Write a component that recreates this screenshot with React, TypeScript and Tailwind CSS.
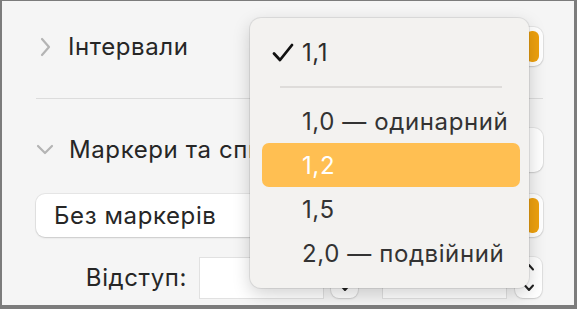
import React from 'react';

const font = { fontFamily: 'Inter, "Noto Sans", sans-serif' };

const ChevronRight = () => (
  <svg width="14" height="20" viewBox="0 0 14 20" className="shrink-0">
    <path d="M4 2 L11 10 L4 18" fill="none" stroke="#b4b4b4" strokeWidth="2.2" strokeLinecap="round" strokeLinejoin="round" />
  </svg>
);

const ChevronDown = () => (
  <svg width="18" height="14" viewBox="0 0 18 14" className="shrink-0">
    <path d="M2 3 L9 10 L16 3" fill="none" stroke="#b4b4b4" strokeWidth="2.2" strokeLinecap="round" strokeLinejoin="round" />
  </svg>
);

const Check = () => (
  <svg width="22" height="20" viewBox="0 0 22 20" className="shrink-0">
    <path d="M2 10.5 L8 17 L20 2" fill="none" stroke="#111" strokeWidth="2.8" strokeLinecap="round" strokeLinejoin="round" />
  </svg>
);

const PopupButton = ({ label, h, arrow = true }: { label?: string; h: string; arrow?: boolean }) => (
  <div className={`${h} flex items-center justify-between rounded-[9px] bg-white shadow-[0_0_0_1px_rgba(0,0,0,0.06),0_1px_2px_rgba(0,0,0,0.12)] pl-[18px] pr-[4px]`}>
    <span className="text-[24px] tracking-[0.6px] text-[#262626]">{label}</span>
    {arrow && <div className="h-[calc(100%-8px)] w-[13px] rounded-[6px] bg-[#eea10e]" />}
  </div>
);

const Stepper = () => (
  <div className="flex h-[41px] w-[27px] shrink-0 flex-col items-center justify-between rounded-[8px] bg-white py-[6px] shadow-[0_0_0_1px_rgba(0,0,0,0.06),0_1px_2px_rgba(0,0,0,0.12)]">
    <svg width="12" height="8" viewBox="0 0 12 8"><path d="M2 6.5 L6 2 L10 6.5" fill="none" stroke="#222" strokeWidth="2" strokeLinecap="round" strokeLinejoin="round" /></svg>
    <svg width="12" height="8" viewBox="0 0 12 8"><path d="M2 1.5 L6 6 L10 1.5" fill="none" stroke="#222" strokeWidth="2" strokeLinecap="round" strokeLinejoin="round" /></svg>
  </div>
);

const items = ['1,0 — одинарний', '1,2', '1,5', '2,0 — подвійний'];

export default function App() {
  return (
    <div style={font} className="relative h-[309px] w-[577px] overflow-hidden border-b-4 border-l-2 border-r-[3px] border-t border-[#7c7c7c] bg-[#f5f5f5]">
      <div className="flex flex-col pl-[34px] pr-[31px] pt-[26px]">
        {/* Інтервали */}
        <div className="flex h-[39px] items-center justify-between">
          <div className="flex items-center gap-[16px] pl-[2px]">
            <ChevronRight />
            <span className="text-[24px] tracking-[0.6px] text-[#262626]">Інтервали</span>
          </div>
          <div className="w-[140px]"><PopupButton h="h-[39px]" /></div>
        </div>

        <div className="mt-[32px] h-px bg-[#dcdcdc]" />

        {/* Маркери та списки */}
        <div className="mt-[29px] flex h-[44px] items-center justify-between">
          <div className="flex items-center gap-[15px]">
            <ChevronDown />
            <span className="whitespace-nowrap text-[24px] tracking-[0.6px] text-[#262626]">Маркери та списки</span>
          </div>
          <div className="w-[140px]"><PopupButton h="h-[44px]" arrow={false} /></div>
        </div>

        <div className="mt-[22px]">
          <PopupButton h="h-[43px]" label="Без маркерів" />
        </div>

        {/* Відступ */}
        <div className="mt-[20px] flex h-[41px] items-center">
          <span className="w-[164px] shrink-0 pr-[13px] text-right text-[24px] tracking-[0.6px] text-[#262626]">Відступ:</span>
          <div className="h-[40px] w-[123px] shrink-0 bg-white shadow-[0_0_0_1px_rgba(0,0,0,0.08)]" />
          <div className="ml-[8px]"><Stepper /></div>
          <div className="ml-[25px] h-[40px] w-[123px] shrink-0 bg-white shadow-[0_0_0_1px_rgba(0,0,0,0.08)]" />
          <div className="ml-[9px]"><Stepper /></div>
        </div>
      </div>

      {/* Dropdown menu */}
      <div className="absolute left-[248px] top-[17px] flex h-[270px] w-[279px] flex-col rounded-[11px] bg-[#f3f2f0] pb-[12px] pl-[12px] pr-[9px] pt-[13px] shadow-[0_0_0_1px_rgba(0,0,0,0.08),0_6px_18px_rgba(0,0,0,0.18)]">
        <div className="flex h-[44px] shrink-0 items-center pl-[10px] text-[24px] tracking-[0.6px] text-[#2c2c2c]">
          <Check />
          <span className="ml-[8px]">1,1</span>
        </div>
        <div className="flex h-[24px] shrink-0 items-center pl-[18px] pr-[18px]">
          <div className="h-[2px] w-full bg-[#dedcda]" />
        </div>
        {items.map((t) => {
          const active = t === '1,2';
          return (
            <div
              key={t}
              className={`flex h-[44px] shrink-0 items-center rounded-[7px] pl-[40px] pt-[2px] text-[24px] tracking-[0.6px] ${active ? 'bg-[#ffbf52] text-white' : 'text-[#333]'}`}
            >
              {t}
            </div>
          );
        })}
      </div>
    </div>
  );
}
